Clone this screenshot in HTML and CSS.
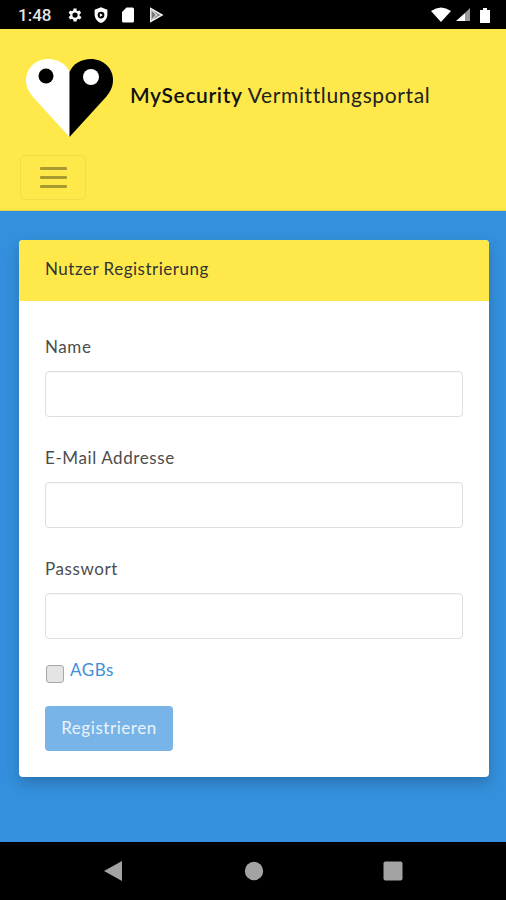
FILE: index.html
```html
<!DOCTYPE html>
<html lang="de">
<head>
<meta charset="utf-8">
<title>Nutzer Registrierung</title>
<link rel="stylesheet" href="styles.css">
</head>
<body>
<div class="status">
  <div class="status-left">
    <span class="time">1:48</span>
    <svg class="si" width="18" height="18" viewBox="0 0 24 24"><path fill="#fff" d="M19.4 13a7.5 7.5 0 0 0 0-2l2.100-1.600-2-3.400-2.500 1a7.500 7.500 0 0 0-1.700-1L15.400 3.300h-4L11 6a7.500 7.500 0 0 0-1.700 1L6.800 6l-2 3.400L7 11a7.500 7.500 0 0 0 0 2l-2.200 1.600 2 3.400 2.500-1a7.500 7.500 0 0 0 1.700 1l.4 2.700h4l.4-2.700a7.500 7.500 0 0 0 1.700-1l2.500 1 2-3.400zM13.400 15.500a3.500 3.500 0 1 1 0-7 3.500 3.500 0 0 1 0 7z"/></svg>
    <svg class="si" width="18" height="18" viewBox="0 0 24 24"><path fill="#fff" fill-rule="evenodd" d="M12 1.500 3.500 5v6c0 5.300 3.600 10.200 8.500 11.500 4.900-1.300 8.500-6.200 8.500-11.500V5zM12 7.500a4.500 4.500 0 1 1 0 9 4.500 4.500 0 0 1 0-9z"/><path fill="#fff" d="M10.500 9.500v5l4-2.500z"/></svg>
    <svg class="si" width="18" height="18" viewBox="0 0 24 24"><path fill="#fff" d="M10 2h8a2 2 0 0 1 2 2v16a2 2 0 0 1-2 2H6a2 2 0 0 1-2-2V8z"/></svg>
    <svg class="si" width="18" height="18" viewBox="0 0 24 24"><path fill="#777" d="M5 3v18l16-9z"/><path fill="none" stroke="#eee" stroke-width="2" d="M5 3.500v17L20 12z"/><path fill="none" stroke="#ddd" stroke-width="1.500" d="M5 3.500 14 14M5 20.500 14 10"/></svg>
  </div>
  <div class="status-right">
    <svg width="20" height="16" viewBox="0 0 20 16"><path fill="#fff" d="M0 4q10-7 20 0l-10 11z"/></svg>
    <svg width="15" height="16" viewBox="0 0 15 16"><path fill="#999" d="M15 1v13h-5V6z"/><path fill="#fff" d="M10 6v8H1z"/></svg>
    <svg class="batt" width="12" height="16" viewBox="0 0 12 16"><path fill="#fff" d="M1 3h3V1h4v2h3v13H1z"/></svg>
  </div>
</div>

<header class="topbar">
  <div class="brand">
    <svg class="logo" width="90" height="80" viewBox="0 0 90 80">
      <path fill="#fff" d="M44.500 79V14C41 6 33 1 23 1 11 1 1 10 1 22c0 7 3 12 7 17z"/>
      <path fill="#000" d="M44.500 79V14C48 6 56 1 66 1c12 0 22 9 22 21 0 7-3 12-7 17z"/>
      <circle cx="21" cy="18" r="7.500" fill="#000"/>
      <circle cx="66" cy="19" r="8" fill="#fff"/>
    </svg>
    <div class="brand-name"><span class="brand-strong">MySecurity</span> Vermittlungsportal</div>
  </div>
  <button class="toggler" type="button" aria-label="Menü">
    <span class="bar"></span><span class="bar"></span><span class="bar"></span>
  </button>
</header>

<main class="content">
  <section class="card">
    <div class="card-head">Nutzer Registrierung</div>
    <form class="card-body">
      <label class="field"><span class="label">Name</span><input class="input" type="text"></label>
      <label class="field"><span class="label">E-Mail Addresse</span><input class="input" type="email"></label>
      <label class="field"><span class="label">Passwort</span><input class="input" type="password"></label>
      <div class="agb"><span class="check"></span><a class="agb-link" href="#">AGBs</a></div>
      <button class="submit" type="button">Registrieren</button>
    </form>
  </section>
</main>

<nav class="navbar">
  <svg width="22" height="22" viewBox="0 0 22 22"><path fill="#a3a3a3" d="M20 1v20L2 11z"/></svg>
  <svg width="20" height="20" viewBox="0 0 20 20"><circle cx="10" cy="10" r="9.200" fill="#a3a3a3"/></svg>
  <svg width="20" height="20" viewBox="0 0 20 20"><rect x="0.500" y="0.500" width="19" height="19" rx="2" fill="#a3a3a3"/></svg>
</nav>
</body>
</html>
```

FILE: styles.css
```css
* { box-sizing: border-box; }
html, body { margin: 0; padding: 0; }
body {
  width: 506px;
  height: 900px;
  display: flex;
  flex-direction: column;
  overflow: hidden;
  background: #3490dc;
  font-family: "Lato", "Open Sans", sans-serif;
  color: #495057;
}
.status {
  height: 29px;
  flex: none;
  background: #000;
  display: flex;
  align-items: center;
  justify-content: space-between;
  padding: 0 15px 0 18px;
  color: #eee;
}
.status-left { display: flex; align-items: center; gap: 9.300px; }
.time { font-family: "Roboto", sans-serif; font-size: 17px; font-weight: 500; margin-right: 4px; color: #e4e4e4; }
.si { display: block; }
.status-right { display: flex; align-items: center; gap: 4px; }
.batt { margin-left: 5px; }
.topbar {
  height: 182px;
  flex: none;
  background: #ffe94a;
  padding: 29px 20px 10px;
  display: flex;
  flex-direction: column;
  align-items: flex-start;
  border-bottom: 1px solid #e0d050;
}
.brand { display: flex; align-items: center; padding-left: 5px; gap: 15px; height: 80px; }
.logo { display: block; flex: none; }
.brand-name { font-size: 21px; color: #212121; letter-spacing: .62px; padding-bottom: 7px; white-space: nowrap; }
.brand-strong { font-weight: 600; color: #111; }
.toggler {
  margin-top: 17px;
  width: 66px;
  height: 45px;
  background: transparent;
  border: 1px solid #f0de48;
  border-radius: 5px;
  display: flex;
  flex-direction: column;
  align-items: center;
  justify-content: center;
  gap: 6.500px;
  padding: 0;
}
.bar { display: block; width: 27px; height: 2.500px; background: #a89a30; border-radius: 1px; }
.content { flex: 1; padding: 29px 17px 0 19px; }
.card {
  height: 537px;
  background: #fff;
  border-radius: 4px;
  overflow: hidden;
  box-shadow: 0 6px 14px rgba(0, 0, 0, .2);
}
.card-head {
  height: 61px;
  background: #ffe94a;
  padding: 0 26px 4px;
  display: flex;
  align-items: center;
  font-size: 17px;
  color: #333;
  letter-spacing: .5px;
}
.card-body { padding: 32px 26px 0; display: flex; flex-direction: column; }
.field { display: flex; flex-direction: column; margin-bottom: 27px; }
.label { font-size: 17px; line-height: 28px; color: #4d4d4d; margin-bottom: 10px; letter-spacing: .6px; }
.input {
  height: 46px;
  width: 100%;
  border: 1px solid #dcdfe3;
  border-radius: 4px;
  background: #fff;
  padding: 0;
  box-shadow: inset 0 1px 1px rgba(0, 0, 0, .03);
}
.agb { display: flex; align-items: flex-start; gap: 6px; height: 32px; margin-top: -7px; }
.check {
  width: 18px;
  height: 18px;
  margin: 6px 0 0 1px;
  background: #e4e4e4;
  border: 1px solid #a8a8a8;
  border-radius: 3px;
}
.agb-link { font-size: 17px; line-height: 22px; color: #3f8fd8; text-decoration: none; letter-spacing: .6px; }
.submit {
  margin-top: 15px;
  width: 128px;
  height: 45px;
  border: none;
  border-radius: 4px;
  background: #79b4e8;
  color: #eaf3fb;
  font-family: inherit;
  font-size: 17px;
  padding: 0 0 3px;
  letter-spacing: .55px;
}
.navbar {
  height: 58px;
  flex: none;
  background: #000;
  display: flex;
  align-items: center;
  justify-content: space-between;
  padding: 0 103px 0 102px;
}
```
